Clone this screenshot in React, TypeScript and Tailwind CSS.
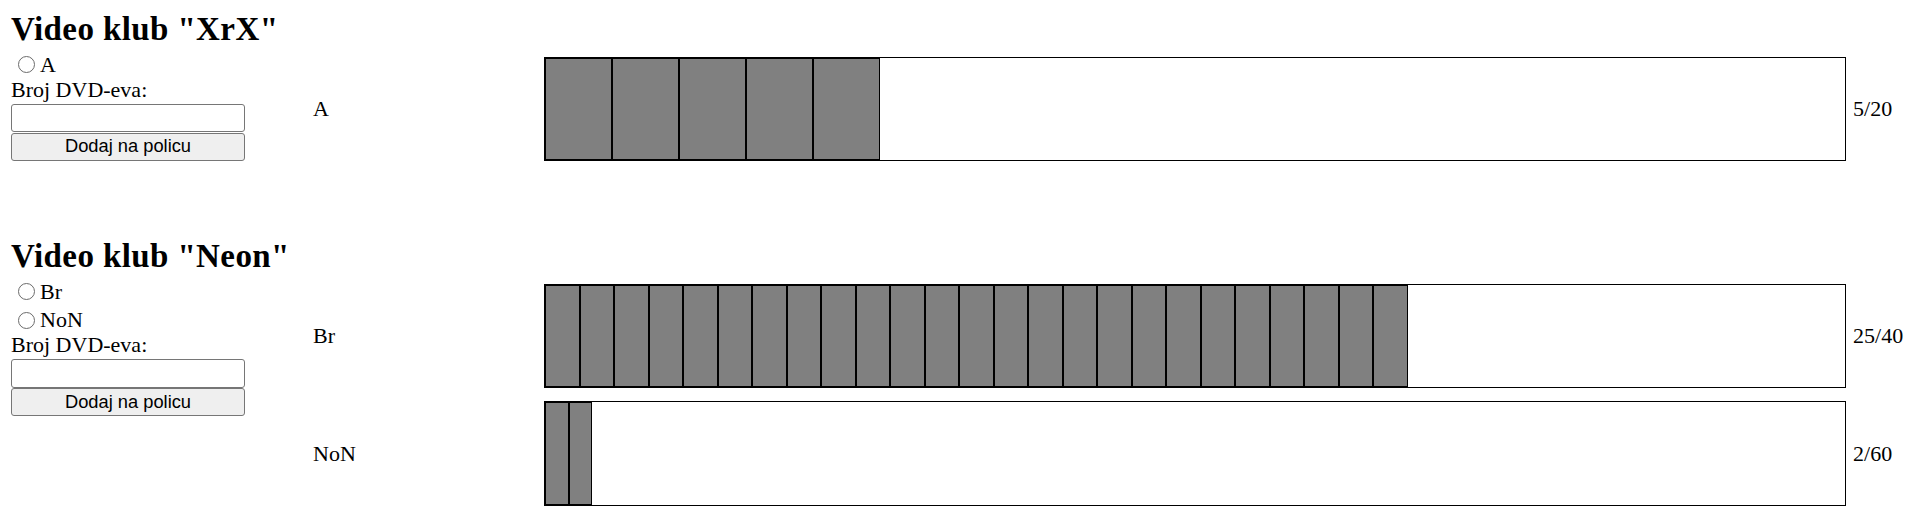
type Shelf = {
  name: string;
  count: number;
  capacity: number;
};

type Club = {
  id: string;
  title: string;
  shelves: Shelf[];
};

const clubs: Club[] = [
  { id: "xrx", title: 'Video klub "XrX"', shelves: [{ name: "A", count: 5, capacity: 20 }] },
  {
    id: "neon",
    title: 'Video klub "Neon"',
    shelves: [
      { name: "Br", count: 25, capacity: 40 },
      { name: "NoN", count: 2, capacity: 60 },
    ],
  },
];

function ShelfRow({ shelf }: { shelf: Shelf }) {
  const cells = Array.from({ length: shelf.count });
  return (
    <div className="flex items-center">
      <div className="w-[231px] leading-[25px]">{shelf.name}</div>
      <div className="flex w-[1302px] h-[104.5px] border border-black">
        {cells.map((_, i) => (
          <div
            key={i}
            className="h-full shrink-0 bg-[#808080] border border-black"
            style={{ width: `calc(${100 / shelf.capacity}% + 2px)` }}
          />
        ))}
      </div>
      <div className="ml-[7px] leading-[25px]">
        {shelf.count}/{shelf.capacity}
      </div>
    </div>
  );
}

function ClubSection({ club, first }: { club: Club; first: boolean }) {
  return (
    <section className={first ? "pt-[10px]" : "mt-[76px]"}>
      <h2 className="text-[33px] font-bold leading-[38px] tracking-[0.4px]">{club.title}</h2>
      <div className="flex items-start">
        <form className="w-[234px]" onSubmit={(e) => e.preventDefault()}>
          {club.shelves.map((s) => (
            <label key={s.name} className="flex items-end h-[28.5px]">
              <span className="ml-[6.5px] mb-[3.5px] w-[17px] h-[17px] shrink-0 rounded-full border-[1.5px] border-[#6b6b6b] bg-white" />
              <span className="ml-[5.5px] leading-[25px]">{s.name}</span>
            </label>
          ))}
          <div className="leading-[25px]">Broj DVD-eva:</div>
          <input
            type="text"
            className="block mt-[2px] w-full h-[28.5px] border border-[#767676] rounded-[3px] bg-white px-1"
          />
          <button className="block mt-[0.5px] w-full h-[28px] border border-[#767676] rounded-[3px] bg-[#efefef] font-['Liberation_Sans',Arial,sans-serif] text-[18.3px] leading-none text-black">
            Dodaj na policu
          </button>
        </form>
        <div className="ml-[68px] pt-[8.5px] flex flex-col gap-[13px]">
          {club.shelves.map((s) => (
            <ShelfRow key={s.name} shelf={s} />
          ))}
        </div>
      </div>
    </section>
  );
}

export default function App() {
  return (
    <div className="pl-[11px] bg-white min-h-screen font-['Liberation_Serif','Times_New_Roman',serif] text-[22px] text-black">
      {clubs.map((c, i) => (
        <ClubSection key={c.id} club={c} first={i === 0} />
      ))}
    </div>
  );
}
